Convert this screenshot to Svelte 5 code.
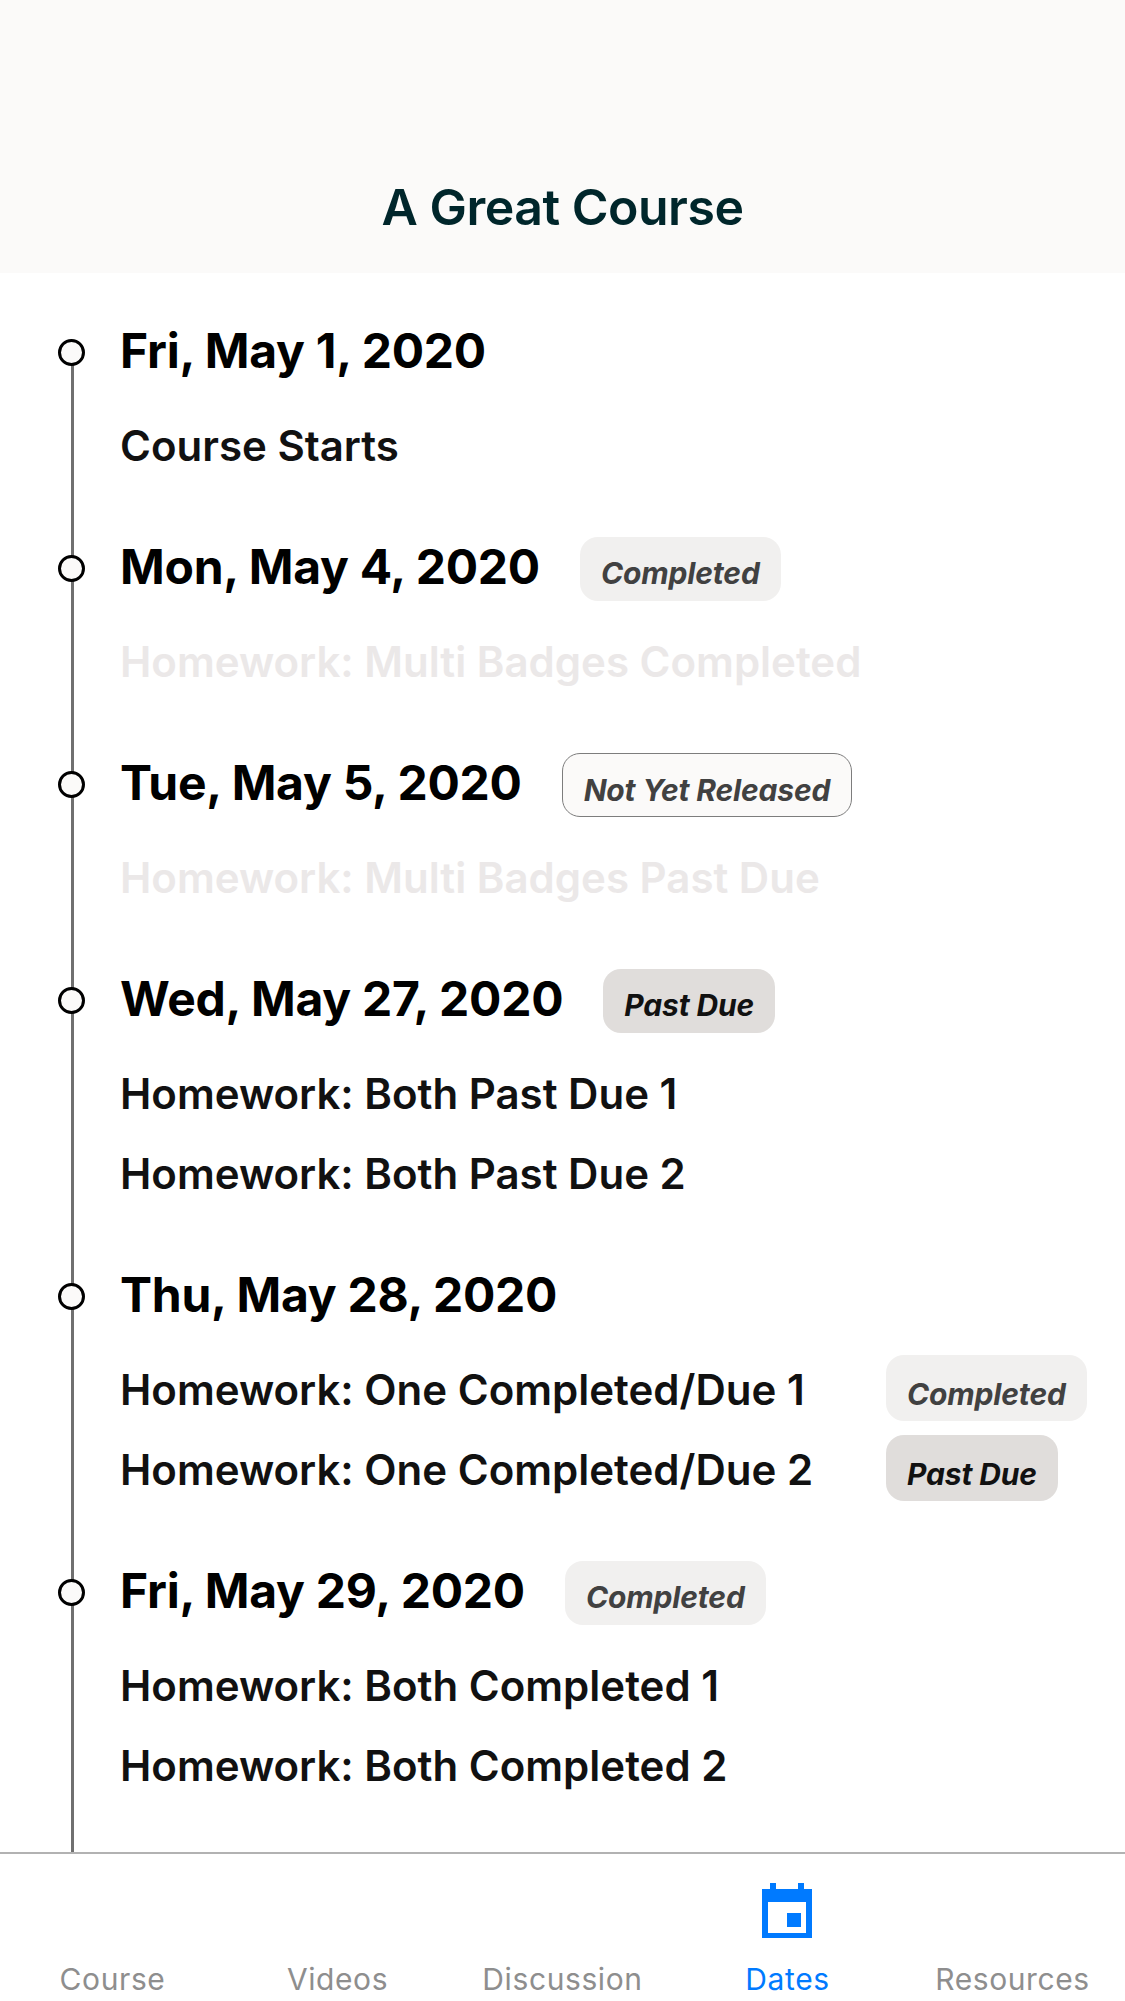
<script>
  const tabs = ['Course', 'Videos', 'Discussion', 'Dates', 'Resources'];
  const sections = [
    { date: 'Fri, May 1, 2020', items: [{ title: 'Course Starts' }] },
    { date: 'Mon, May 4, 2020', badge: 'completed', items: [{ title: 'Homework: Multi Badges Completed', faded: true }] },
    { date: 'Tue, May 5, 2020', badge: 'unreleased', items: [{ title: 'Homework: Multi Badges Past Due', faded: true }] },
    { date: 'Wed, May 27, 2020', badge: 'due', items: [{ title: 'Homework: Both Past Due 1' }, { title: 'Homework: Both Past Due 2' }] },
    {
      date: 'Thu, May 28, 2020',
      items: [
        { title: 'Homework: One Completed/Due 1', badge: 'completed' },
        { title: 'Homework: One Completed/Due 2', badge: 'due' }
      ]
    },
    { date: 'Fri, May 29, 2020', badge: 'completed', items: [{ title: 'Homework: Both Completed 1' }, { title: 'Homework: Both Completed 2' }] }
  ];
  const labels = { completed: 'Completed', unreleased: 'Not Yet Released', due: 'Past Due' };
</script>

<div class="screen">
  <header class="header">
    <h1>A Great Course</h1>
  </header>

  <main class="timeline">
    <div class="line"></div>
    {#each sections as section}
      <section class="day">
        <div class="day__head">
          <span class="dot"></span>
          <h2>{section.date}</h2>
          {#if section.badge}
            <span class="badge badge--{section.badge}">{labels[section.badge]}</span>
          {/if}
        </div>
        {#each section.items as item}
          <div class="item" class:item--faded={item.faded}>
            <span>{item.title}</span>
            {#if item.badge}
              <span class="badge badge--low badge--{item.badge}">{labels[item.badge]}</span>
            {/if}
          </div>
        {/each}
      </section>
    {/each}
  </main>

  <nav class="tabs">
    {#each tabs as tab}
      <div class="tab" class:tab--active={tab === 'Dates'}>
        {#if tab === 'Dates'}
          <svg width="50" height="56" viewBox="0 0 50 56">
            <path fill="#007aff" fill-rule="evenodd" d="M8 0h6v6h22V0h6v6h8v49H0V6h8zM6 19v31h38V19zM25 30h14v14H25z" />
          </svg>
        {/if}
        <span>{tab}</span>
      </div>
    {/each}
  </nav>
</div>

<style>
  :global(body) {
    margin: 0;
    background: #fff;
  }

  .screen {
    display: flex;
    flex-direction: column;
    height: 2001px;
    overflow: hidden;
    font-family: Inter, "Liberation Sans", sans-serif;
  }

  .header {
    box-sizing: border-box;
    height: 273px;
    flex: none;
    padding-top: 175px;
    background: #fbfaf9;
    text-align: center;
  }

  h1 {
    margin: 0;
    font-size: 50px;
    line-height: 64px;
    font-weight: 600;
    letter-spacing: -0.5px;
    color: #00262b;
  }

  .timeline {
    position: relative;
    flex: 1;
    padding: 42px 30px 0 120px;
    overflow: hidden;
  }

  .line {
    position: absolute;
    left: 71px;
    top: 78px;
    bottom: 0;
    width: 3px;
    background: #707070;
  }

  .day {
    padding-bottom: 46px;
  }

  .day__head {
    position: relative;
    display: flex;
    align-items: center;
    gap: 40px;
    height: 72px;
    margin-bottom: 18px;
  }

  .dot {
    position: absolute;
    left: -62px;
    top: 24px;
    box-sizing: border-box;
    width: 27px;
    height: 27px;
    border: 3px solid #000;
    border-radius: 50%;
    background: #fbfaf9;
  }

  h2 {
    margin: 0;
    font-size: 48px;
    line-height: 72px;
    font-weight: 700;
    letter-spacing: -0.25px;
    color: #000;
  }

  .item {
    display: grid;
    grid-template-columns: 766px auto;
    justify-content: start;
    align-items: center;
    height: 80px;
    font-size: 42px;
    font-weight: 600;
    color: #111;
  }

  .item--faded {
    color: #ebe8e8;
  }

  .badge {
    box-sizing: border-box;
    height: 64px;
    margin-top: 3px;
    padding: 12px 21px 0;
    border-radius: 18px;
    font-size: 30px;
    line-height: 48px;
    font-weight: 700;
    font-style: italic;
    letter-spacing: -0.15px;
    white-space: nowrap;
  }

  .badge--low {
    justify-self: start;
    height: 66px;
    margin-top: -2px;
    padding-top: 14px;
    line-height: 50px;
  }

  .badge--completed {
    background: #f1f0ef;
    color: #414141;
  }

  .badge--unreleased {
    border: 1.5px solid #7d7d7d;
    background: #fbfaf9;
    color: #414141;
  }

  .badge--due {
    background: #e0dddb;
    color: #111;
  }

  .tabs {
    display: grid;
    grid-template-columns: repeat(5, 1fr);
    box-sizing: border-box;
    height: 149px;
    flex: none;
    border-top: 2px solid #b2b2b2;
    background: #fff;
  }

  .tab {
    display: flex;
    flex-direction: column;
    justify-content: flex-end;
    align-items: center;
    gap: 20px;
    padding-bottom: 2px;
    font-size: 30px;
    line-height: 40px;
    letter-spacing: 0.6px;
    color: #8e8e8e;
  }

  .tab svg {
    margin-right: 1px;
  }

  .tab--active {
    color: #007aff;
  }
</style>
